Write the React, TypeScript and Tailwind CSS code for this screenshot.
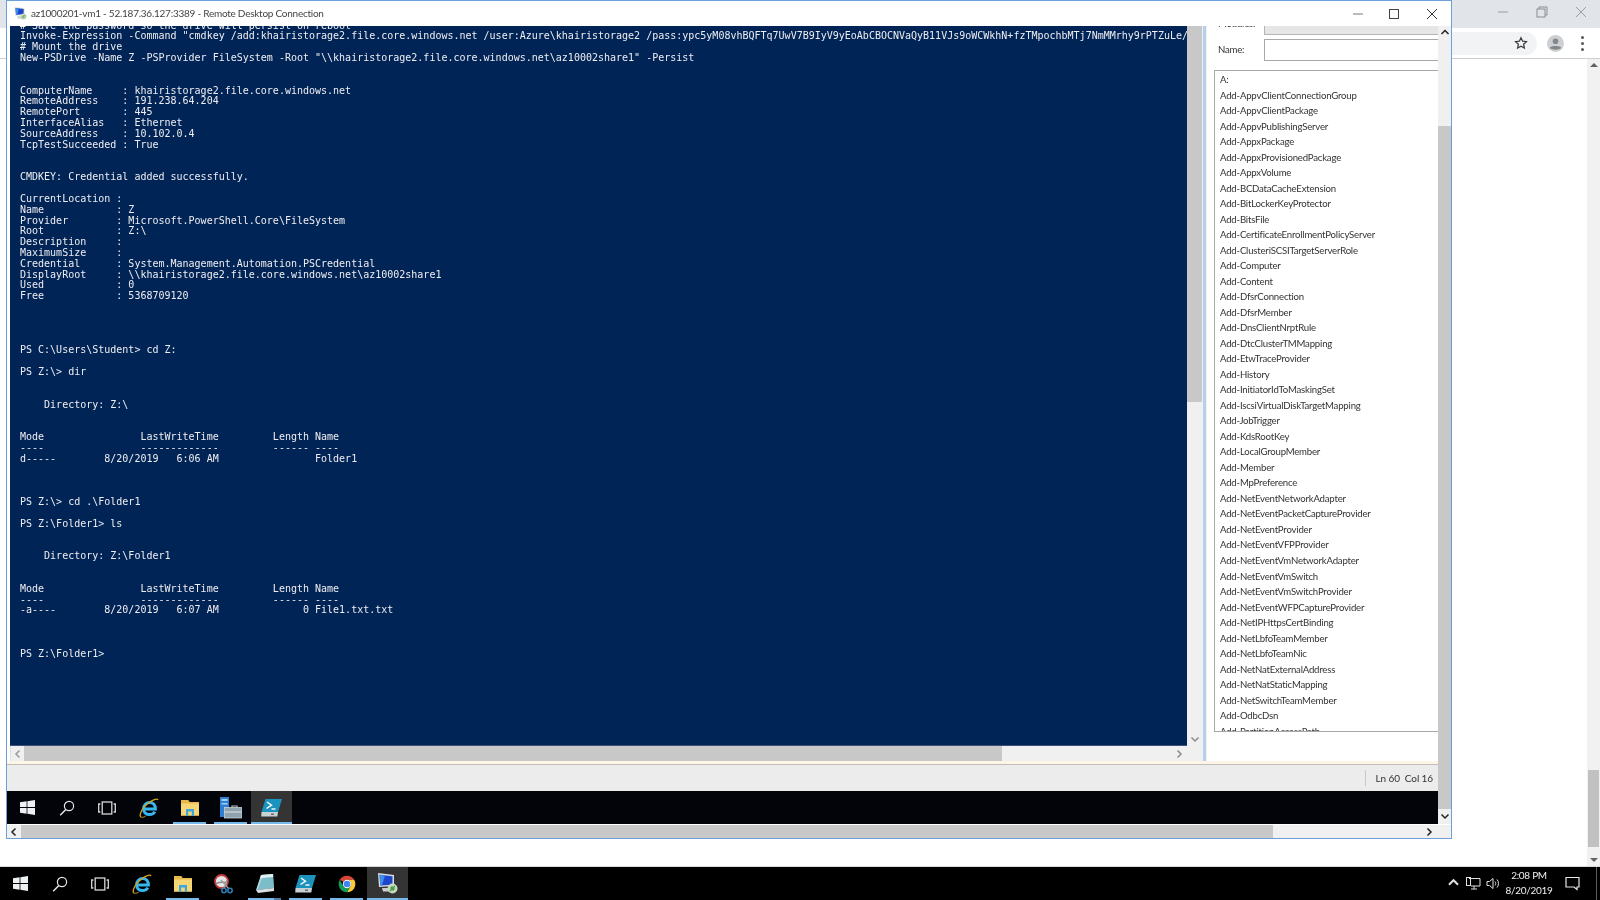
import type { ReactNode } from "react";

const TERMINAL_LINES = [
  "# Save the password so the drive will persist on reboot",
  'Invoke-Expression -Command "cmdkey /add:khairistorage2.file.core.windows.net /user:Azure\\khairistorage2 /pass:ypc5yM08vhBQFTq7UwV7B9IyV9yEoAbCBOCNVaQyB11VJs9oWCWkhN+fzTMpochbMTj7NmMMrhy9rPTZuLe/',
  "# Mount the drive",
  'New-PSDrive -Name Z -PSProvider FileSystem -Root "\\\\khairistorage2.file.core.windows.net\\az10002share1" -Persist',
  "",
  "",
  "ComputerName     : khairistorage2.file.core.windows.net",
  "RemoteAddress    : 191.238.64.204",
  "RemotePort       : 445",
  "InterfaceAlias   : Ethernet",
  "SourceAddress    : 10.102.0.4",
  "TcpTestSucceeded : True",
  "",
  "",
  "CMDKEY: Credential added successfully.",
  "",
  "CurrentLocation :",
  "Name            : Z",
  "Provider        : Microsoft.PowerShell.Core\\FileSystem",
  "Root            : Z:\\",
  "Description     :",
  "MaximumSize     :",
  "Credential      : System.Management.Automation.PSCredential",
  "DisplayRoot     : \\\\khairistorage2.file.core.windows.net\\az10002share1",
  "Used            : 0",
  "Free            : 5368709120",
  "",
  "",
  "",
  "",
  "PS C:\\Users\\Student> cd Z:",
  "",
  "PS Z:\\> dir",
  "",
  "",
  "    Directory: Z:\\",
  "",
  "",
  "Mode                LastWriteTime         Length Name",
  "----                -------------         ------ ----",
  "d-----        8/20/2019   6:06 AM                Folder1",
  "",
  "",
  "",
  "PS Z:\\> cd .\\Folder1",
  "",
  "PS Z:\\Folder1> ls",
  "",
  "",
  "    Directory: Z:\\Folder1",
  "",
  "",
  "Mode                LastWriteTime         Length Name",
  "----                -------------         ------ ----",
  "-a----        8/20/2019   6:07 AM              0 File1.txt.txt",
  "",
  "",
  "",
  "PS Z:\\Folder1>",
];

const COMMANDS = [
  "A:",
  "Add-AppvClientConnectionGroup",
  "Add-AppvClientPackage",
  "Add-AppvPublishingServer",
  "Add-AppxPackage",
  "Add-AppxProvisionedPackage",
  "Add-AppxVolume",
  "Add-BCDataCacheExtension",
  "Add-BitLockerKeyProtector",
  "Add-BitsFile",
  "Add-CertificateEnrollmentPolicyServer",
  "Add-ClusteriSCSITargetServerRole",
  "Add-Computer",
  "Add-Content",
  "Add-DfsrConnection",
  "Add-DfsrMember",
  "Add-DnsClientNrptRule",
  "Add-DtcClusterTMMapping",
  "Add-EtwTraceProvider",
  "Add-History",
  "Add-InitiatorIdToMaskingSet",
  "Add-IscsiVirtualDiskTargetMapping",
  "Add-JobTrigger",
  "Add-KdsRootKey",
  "Add-LocalGroupMember",
  "Add-Member",
  "Add-MpPreference",
  "Add-NetEventNetworkAdapter",
  "Add-NetEventPacketCaptureProvider",
  "Add-NetEventProvider",
  "Add-NetEventVFPProvider",
  "Add-NetEventVmNetworkAdapter",
  "Add-NetEventVmSwitch",
  "Add-NetEventVmSwitchProvider",
  "Add-NetEventWFPCaptureProvider",
  "Add-NetIPHttpsCertBinding",
  "Add-NetLbfoTeamMember",
  "Add-NetLbfoTeamNic",
  "Add-NetNatExternalAddress",
  "Add-NetNatStaticMapping",
  "Add-NetSwitchTeamMember",
  "Add-OdbcDsn",
  "Add-PartitionAccessPath",
];

const UI_FONT = '"Lato", sans-serif';

function WindowsIcon() {
  return (
    <svg width="15" height="15" viewBox="0 0 15 15" fill="#eef1f3">
      <path d="M0 2.3 6.6 1.3V7H0z" />
      <path d="M7.4 1.2 15 0V7H7.4z" />
      <path d="M0 8H6.6V13.7L0 12.7z" />
      <path d="M7.4 8H15V15L7.4 13.8z" />
    </svg>
  );
}

function SearchIcon() {
  return (
    <svg width="16" height="16" viewBox="0 0 16 16" fill="none" stroke="#e6e6e6" strokeWidth="1.2">
      <circle cx="10" cy="6" r="4.6" />
      <path d="M6.8 9.4 1.2 15.2" strokeWidth="1.5" />
    </svg>
  );
}

function TaskViewIcon() {
  return (
    <svg width="18" height="14" viewBox="0 0 18 14" fill="none" stroke="#d8d8d8" strokeWidth="1.3">
      <rect x="4.2" y="1" width="9.6" height="12" />
      <path d="M2.4 3H.7V11H2.4M15.6 3H17.3V11H15.6" />
    </svg>
  );
}

function IeIcon() {
  return (
    <svg width="20" height="20" viewBox="0 0 20 20" fill="none">
      <path d="M4.4 11H16.4C16.4 6.6 13.8 4.4 10.8 4.4 7.2 4.4 4.6 7.2 4.6 10.8 4.6 14.4 7.2 16.6 10.6 16.6 13 16.6 14.8 15.6 15.8 13.6" stroke="#35b6ee" strokeWidth="3" />
      <path d="M1.8 19C-.4 16.6 4 8.800 9.400 5 13.800 1.800 18 .2 19 1.800" stroke="#d9a520" strokeWidth="1.3" />
      <path d="M1.800 19C2.800 19.800 4.800 19.200 6.600 18" stroke="#8a6a10" strokeWidth="1.300" />
    </svg>
  );
}

function FolderIcon() {
  return (
    <svg width="18" height="16" viewBox="0 0 18 16">
      <path d="M0 0H7L8.500 2H18V16H0z" fill="#f7d774" />
      <path d="M0 0H7L8.500 2H18V3.500H0z" fill="#e7b94a" />
      <path d="M0 15H18V16H0z" fill="#c9a24a" />
      <path d="M5 9H13V16H10.800V11.500H7.200V16H5z" fill="#3fa5e0" />
    </svg>
  );
}

function ServerManagerIcon() {
  return (
    <svg width="22" height="22" viewBox="0 0 22 22">
      <rect x="0" y="0" width="9" height="20" fill="#2f7fd0" />
      <rect x="1.500" y="2" width="6" height="2" fill="#9fd0f5" />
      <rect x="1.500" y="6" width="6" height="1.500" fill="#9fd0f5" />
      <path d="M12 10.500V9H17V10.500" fill="none" stroke="#b8c4cc" strokeWidth="1.200" />
      <rect x="4.500" y="10.500" width="17" height="10.500" fill="#8fa2b0" stroke="#c8d2d8" strokeWidth="0.800" />
      <rect x="4.500" y="14.500" width="17" height="1" fill="#dbe3e8" />
    </svg>
  );
}

function PowerShellIcon() {
  return (
    <svg width="21" height="18" viewBox="0 0 21 18">
      <path d="M4.500 0H21L17 13H.500z" fill="#1c93bd" />
      <path d="M.500 13H17L16.300 17.500H.200z" fill="#c9d0d4" />
      <rect x="10" y="14.600" width="3" height="1.200" fill="#555" />
      <path d="M6 3 10.500 6.200 5.500 9.500" fill="none" stroke="#fff" strokeWidth="1.400" />
      <path d="M10.500 10H14.500" stroke="#fff" strokeWidth="1.400" />
    </svg>
  );
}

function SnipIcon() {
  return (
    <svg width="20" height="20" viewBox="0 0 20 20" fill="none">
      <circle cx="7.500" cy="7.500" r="6.500" fill="#e6e6e6" stroke="#c33b3b" strokeWidth="1.800" />
      <path d="M2 9.500C5 8 9 8 13 8.500" stroke="#8c8c8c" strokeWidth="1.500" />
      <path d="M7 6 15 15M13 6 10 14" stroke="#9aa0a5" strokeWidth="1.300" />
      <circle cx="16" cy="16.500" r="2.200" stroke="#2d7fb5" strokeWidth="1.500" />
      <circle cx="10" cy="16.500" r="2.200" stroke="#2d7fb5" strokeWidth="1.500" />
    </svg>
  );
}

function NotepadIcon() {
  return (
    <svg width="20" height="20" viewBox="0 0 20 20">
      <path d="M6 1 18 0 19 14 1 16z" fill="#a9dbe3" />
      <path d="M6 1 18 0 18.300 3 5 4.500z" fill="#dfeff2" />
      <path d="M7 4 18 3 19 14 2.500 16z" fill="#5fa9b8" opacity="0.600" />
      <path d="M1 16 19 14 19 17 3 19z" fill="#d8e0e2" />
    </svg>
  );
}

function ChromeIcon() {
  return (
    <svg width="20" height="20" viewBox="0 0 24 24">
      <path d="M3.340 7A10 10 0 0 1 20.660 7H12a5 5 0 0 0-4.330 2.500z" fill="#db4437" />
      <path d="M20.660 7A10 10 0 0 1 12 22l4.330-7.500A5 5 0 0 0 12 7z" fill="#fcc934" />
      <path d="M12 22A10 10 0 0 1 3.340 7l4.330 7.500A5 5 0 0 0 16.330 14.500z" fill="#0f9d58" />
      <circle cx="12" cy="12" r="5" fill="#fff" />
      <circle cx="12" cy="12" r="4" fill="#4285f4" />
    </svg>
  );
}

function RdpIcon({ size = 21 }: { size?: number }) {
  return (
    <svg width={size} height={size} viewBox="0 0 21 21">
      <path d="M1 0 17 2V13L2 14z" fill="#d8dce0" />
      <path d="M2.500 1.800 15.500 3.300V11.800L3.300 12.500z" fill="#1d45c8" />
      <path d="M2.500 1.800 8 2.500 5 12.400 3.300 12.500z" fill="#3d8ee8" />
      <path d="M5 15H15L17 18.500H6z" fill="#c9cdd0" />
      <circle cx="15.500" cy="15.500" r="5" fill="#c8d8c0" />
      <path d="M13 18 18 13M13.500 15.500 15.500 13.500M15.500 17.500 17.500 15.500" stroke="#3f9a3a" strokeWidth="1.200" />
    </svg>
  );
}

function Chevron({ dir, className }: { dir: "up" | "down" | "left" | "right"; className: string }) {
  const d = {
    up: "M1.500 6 5 2.500 8.500 6",
    down: "M1.500 3.500 5 7 8.500 3.500",
    left: "M6.500 1.500 3 5 6.500 8.500",
    right: "M3.500 1.500 7 5 3.500 8.500",
  }[dir];
  return (
    <svg width="10" height="10" viewBox="0 0 10 10" fill="none" stroke="currentColor" strokeWidth="1.500" className={className}>
      <path d={d} />
    </svg>
  );
}

function TaskButton({ icon, wide, active, running, notch }: { icon: ReactNode; wide?: boolean; active?: boolean; running?: boolean; notch?: boolean }) {
  return (
    <div className={`relative flex h-full shrink-0 items-center justify-center ${wide ? "w-[41px]" : "w-[40px]"} ${active ? "bg-[#343434]" : ""}`}>
      {icon}
      {running && (
        <div className={`absolute bottom-0 h-[2px] bg-[#76b9ed] ${active ? "inset-x-0" : "inset-x-[4px]"}`}>
          {notch && <div className="ml-auto h-full w-[7px] bg-[#4e7ea3]" />}
        </div>
      )}
    </div>
  );
}

function TaskbarStart() {
  return (
    <>
      <TaskButton icon={<WindowsIcon />} />
      <TaskButton icon={<SearchIcon />} />
      <TaskButton icon={<TaskViewIcon />} />
      <div className="w-px shrink-0" />
    </>
  );
}

function ChromeWindow() {
  return (
    <div className="flex min-h-0 flex-1 flex-col bg-white">
      <div className="flex h-[28px] shrink-0 items-center justify-end bg-[#e1e4e8]">
        <svg width="12" height="12" viewBox="0 0 12 12" stroke="#9a9da1" fill="none" className="mb-[4px] mr-[27px]">
          <path d="M1 6H11" />
        </svg>
        <svg width="12" height="12" viewBox="0 0 12 12" stroke="#8a8d91" fill="none" className="mb-[4px] mr-[27px]">
          <rect x="1" y="3" width="8" height="8" />
          <path d="M3 3V1H11V9H9" />
        </svg>
        <svg width="12" height="12" viewBox="0 0 12 12" stroke="#9a9da1" fill="none" className="mb-[4px] mr-[13px]">
          <path d="M1 1 11 11M11 1 1 11" />
        </svg>
      </div>
      <div className="flex h-[31px] shrink-0 items-center justify-end border-b border-[#cfcfcf] bg-white">
        <div className="flex h-[23px] w-[300px] items-center justify-end rounded-r-full bg-[#f1f3f4] pr-[9px]">
          <svg width="14" height="14" viewBox="0 0 24 24" fill="none" stroke="#3c4043" strokeWidth="2.200">
            <path d="M12 3 14.800 9 21.300 9.800 16.500 14.200 17.800 20.700 12 17.500 6.200 20.700 7.500 14.200 2.700 9.800 9.200 9z" />
          </svg>
        </div>
        <svg width="17" height="17" viewBox="0 0 17 17" className="ml-[10px]">
          <circle cx="8.500" cy="8.500" r="8.500" fill="#cdd0d3" />
          <circle cx="8.500" cy="6.300" r="2.800" fill="#84878a" />
          <path d="M2.800 13C3.600 10.400 13.400 10.400 14.200 13 12 15.200 5 15.200 2.800 13z" fill="#84878a" />
        </svg>
        <div className="ml-[17px] mr-[16px] flex flex-col gap-[3px]">
          <div className="size-[3px] rounded-full bg-[#55585c]" />
          <div className="size-[3px] rounded-full bg-[#55585c]" />
          <div className="size-[3px] rounded-full bg-[#55585c]" />
        </div>
      </div>
      <div className="flex min-h-0 flex-1 justify-end">
        <div className="flex w-[13px] flex-col items-center justify-between bg-[#f1f1f1] py-[4px] text-[#5f6368]">
          <div className="h-0 w-0 border-x-[4px] border-b-[4px] border-x-transparent border-b-current" />
          <div className="mt-auto mb-[11px] h-[77px] w-[11px] bg-[#c1c1c1]" />
          <div className="h-0 w-0 border-x-[4px] border-t-[4px] border-x-transparent border-t-current" />
        </div>
      </div>
    </div>
  );
}

function RemoteContent() {
  return (
    <div className="flex min-h-0 flex-1 bg-white pl-[3px]">
      <div className="flex w-[1192px] shrink-0 flex-col">
        <div className="flex min-h-0 flex-1">
          <div className="min-w-0 flex-1 overflow-hidden border-b border-[#3d4f78] bg-[#012456]">
            <pre
              className="mt-[-5.4px] pl-[10px] text-[10px] leading-[10.83px] text-[#eeedf0]"
              style={{ fontFamily: '"DejaVu Sans Mono", monospace' }}
            >
              {TERMINAL_LINES.join("\n")}
            </pre>
          </div>
          <div className="flex w-[15px] shrink-0 flex-col bg-[#f0f0f0]">
            <div className="h-[376px] bg-[#c8c8c8]" />
            <Chevron dir="down" className="mx-auto mb-[2px] mt-auto text-[#8c8c8c]" />
          </div>
        </div>
        <div className="flex h-[15px] shrink-0 items-center bg-[#f0f0f0]">
          <div className="flex h-full w-[14px] items-center justify-center border-l border-[#e0e0e0]">
            <Chevron dir="left" className="text-[#9a9a9a]" />
          </div>
          <div className="h-full w-[978px] bg-[#c8c8c8]" />
          <Chevron dir="right" className="ml-auto mr-[18px] text-[#8c8c8c]" />
        </div>
      </div>
      <div className="w-[5px] shrink-0 border-x border-[#f0f0f0] bg-[#b6cfea]" />
      <div className="flex min-w-0 flex-1 flex-col overflow-hidden bg-white pl-[7px] text-[#333]" style={{ fontFamily: UI_FONT }}>
        <div className="mt-[-12px] flex h-[21px] shrink-0 items-center">
          <span className="ml-[4px] w-[46px] text-[9.6px] tracking-[-0.2px]">Modules:</span>
          <div className="h-full flex-1 border border-r-0 border-[#b4b4b4] bg-[#e6e6e6]" />
        </div>
        <div className="mt-[4px] flex h-[22px] shrink-0 items-center">
          <span className="ml-[4px] w-[46px] text-[9.6px] tracking-[-0.2px]">Name:</span>
          <div className="h-full flex-1 border border-r-0 border-[#a8a8a8] bg-white" />
        </div>
        <div className="mt-[9px] h-[662px] overflow-hidden border border-r-0 border-[#a8a8a8] pl-[5px] pt-[1px]">
          {COMMANDS.map((c) => (
            <div key={c} className="h-[15.52px] whitespace-nowrap text-[9.6px] leading-[15.52px] tracking-[-0.2px]">
              {c}
            </div>
          ))}
        </div>
      </div>
    </div>
  );
}

function RemoteDesktop() {
  return (
    <div className="absolute left-[6px] top-0 flex h-[839px] w-[1446px] flex-col border border-[#6d9fd8] bg-white">
      <div className="flex h-[25px] shrink-0 items-center bg-white pl-[7px]">
        <RdpIcon size={13} />
        <span className="ml-[4px] whitespace-nowrap text-[10px] tracking-[-0.25px] text-[#444]" style={{ fontFamily: UI_FONT }}>
          az1000201-vm1 - 52.187.36.127:3389 - Remote Desktop Connection
        </span>
        <svg width="12" height="12" viewBox="0 0 12 12" stroke="#777" fill="none" className="ml-auto mr-[24px]">
          <path d="M1 6H11" />
        </svg>
        <svg width="12" height="12" viewBox="0 0 12 12" stroke="#444" fill="none" className="mr-[26px]">
          <rect x="1.500" y="1.500" width="9" height="9" />
        </svg>
        <svg width="12" height="12" viewBox="0 0 12 12" stroke="#333" fill="none" className="mr-[13px]">
          <path d="M1 1 11 11M11 1 1 11" />
        </svg>
      </div>
      <div className="flex min-h-0 flex-1">
        <div className="flex min-w-0 flex-1 flex-col">
          <RemoteContent />
          <div className="h-[3px] shrink-0 bg-[#fdf6e8]" />
          <div className="flex h-[27px] shrink-0 items-center justify-end border-t border-[#c4bdb6] bg-[#ececec] pr-[5px]">
            <div className="mr-[10px] h-[16px] w-px bg-[#c8c8c8]" />
            <span className="whitespace-pre text-[10px] tracking-[-0.1px] text-[#333]" style={{ fontFamily: UI_FONT }}>
              Ln 60  Col 16
            </span>
          </div>
          <div className="flex h-[33px] shrink-0 bg-[#02040a]">
            <TaskbarStart />
            <TaskButton wide icon={<IeIcon />} />
            <TaskButton wide running icon={<FolderIcon />} />
            <TaskButton wide running icon={<ServerManagerIcon />} />
            <TaskButton wide running active icon={<PowerShellIcon />} />
          </div>
        </div>
        <div className="flex w-[13px] shrink-0 flex-col items-center bg-[#f0f0f0] py-[2px]">
          <Chevron dir="up" className="text-[#222]" />
          <div className="mt-[88px] w-full flex-1 bg-[#c8c8c8]" />
          <Chevron dir="down" className="mb-[1px] mt-[2px] text-[#222]" />
        </div>
      </div>
      <div className="flex h-[14px] shrink-0 items-center border-t border-white bg-[#f0f0f0]">
        <div className="flex h-full w-[14px] items-center justify-center">
          <Chevron dir="left" className="text-[#222]" />
        </div>
        <div className="h-full w-[1252px] bg-[#c8c8c8]" />
        <Chevron dir="right" className="ml-auto mr-[17px] text-[#222]" />
      </div>
    </div>
  );
}

function Taskbar() {
  return (
    <div className="flex h-[34px] shrink-0 border-t border-[#d8d8d8] bg-black">
      <TaskbarStart />
      <TaskButton wide icon={<IeIcon />} />
      <TaskButton wide running icon={<FolderIcon />} />
      <TaskButton wide icon={<SnipIcon />} />
      <TaskButton wide running notch icon={<NotepadIcon />} />
      <TaskButton wide running icon={<PowerShellIcon />} />
      <TaskButton wide running icon={<ChromeIcon />} />
      <TaskButton wide running active icon={<RdpIcon />} />
      <div className="ml-auto flex items-center text-white">
        <Chevron dir="up" className="mr-[6px] size-[13px] text-[#e0e0e0]" />
        <svg width="15" height="15" viewBox="0 0 15 15" fill="none" stroke="#e0e0e0" className="mr-[5px]">
          <path d="M3 2.500H14V10H5M8 10V13M5 13H11" />
          <rect x="0.500" y="1.500" width="4" height="8" />
        </svg>
        <svg width="15" height="15" viewBox="0 0 15 15" fill="none" stroke="#e0e0e0">
          <path d="M1 5.500H3.500L7 2.500V12.500L3.500 9.500H1z" />
          <path d="M9 5.500C10 6.500 10 8.500 9 9.500M11 3.500C13 5.500 13 9.500 11 11.500" />
        </svg>
        <div className="ml-[1px] flex w-[54px] flex-col items-center pb-[2px] text-[10px] leading-[15px] tracking-[-0.3px] text-[#f0f0f0]" style={{ fontFamily: UI_FONT }}>
          <span>2:08 PM</span>
          <span>8/20/2019</span>
        </div>
        <svg width="15" height="15" viewBox="0 0 15 15" fill="none" stroke="#e8e8e8" strokeWidth="1.200" className="ml-[9px] mr-[16px]">
          <path d="M1 1.500H14V11H12V13.500L9 11H1z" />
        </svg>
        <div className="mr-[3px] h-full w-px bg-[#5c5c5c]" />
      </div>
    </div>
  );
}

export default function App() {
  return (
    <div className="relative flex h-[900px] w-[1600px] flex-col overflow-hidden bg-white blur-[0.35px]" style={{ fontFamily: UI_FONT }}>
      <ChromeWindow />
      <RemoteDesktop />
      <Taskbar />
    </div>
  );
}
